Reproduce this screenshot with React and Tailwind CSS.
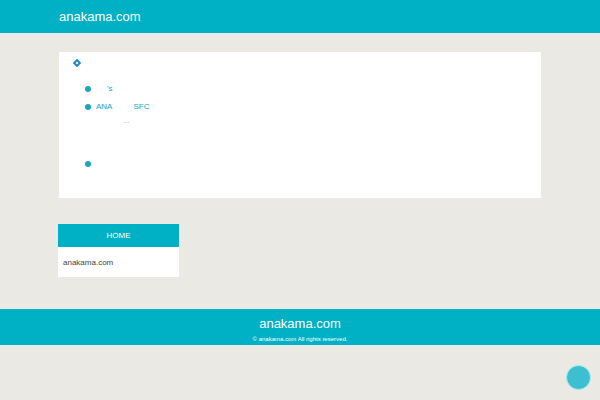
export default function App() {
  return (
    <div className="min-h-[400px] bg-[#ebe9e3] font-['Liberation_Sans',Arial,sans-serif] relative">
      <header className="h-[33px] bg-[#00b0c4] flex items-center px-[59px]">
        <h1 className="text-white text-[13px] leading-none">anakama.com</h1>
      </header>

      <main className="px-[58px] pt-[18px] pb-[32px]">
        <section className="bg-white h-[148px] border border-[#ebe9e3] pl-[15px] pt-[6px]">
          <div className="flex items-center h-[10px]">
            <span className="w-[6px] h-[6px] rotate-45 border-[2px] border-[#1a86c8] bg-white"></span>
          </div>
          <ul className="mt-[15px] pl-[11px] text-[8px] text-[#1aa3b8] leading-none">
            <li className="flex items-center h-[12px]">
              <span className="w-[6px] h-[6px] rounded-full bg-[#1aa8b8]"></span>
              <span className="ml-[16px]">'s</span>
            </li>
            <li className="flex items-center h-[12px] mt-[6px]">
              <span className="w-[6px] h-[6px] rounded-full bg-[#1aa8b8]"></span>
              <span className="ml-[5px]">ANA</span>
              <span className="ml-[21px]">SFC</span>
            </li>
            <li className="h-[12px] pl-[38px] pt-[3px] text-[#999] text-[7px] leading-[10px]">…</li>
            <li className="flex items-center h-[12px] mt-[33px]">
              <span className="w-[6px] h-[6px] rounded-full bg-[#1aa8b8]"></span>
            </li>
          </ul>
        </section>

        <aside className="w-[121px] mt-[25px]">
          <div className="h-[23px] bg-[#00b0c4] flex items-center justify-center text-white text-[8px]">HOME</div>
          <div className="h-[30px] bg-white flex items-center px-[5px] pt-[2px] text-[8px] text-[#444]">anakama.com</div>
        </aside>
      </main>

      <footer className="h-[36px] bg-[#00b0c4] flex flex-col items-center text-white">
        <p className="text-[13px] leading-none mt-[8px]">anakama.com</p>
        <p className="text-[6px] leading-none mt-[6px]">© anakama.com All rights reserved.</p>
      </footer>

      <button className="absolute right-[9px] bottom-[10px] w-[25px] h-[25px] rounded-full bg-[#3dbfd0] border border-[#a8ecf2]"></button>
    </div>
  );
}
